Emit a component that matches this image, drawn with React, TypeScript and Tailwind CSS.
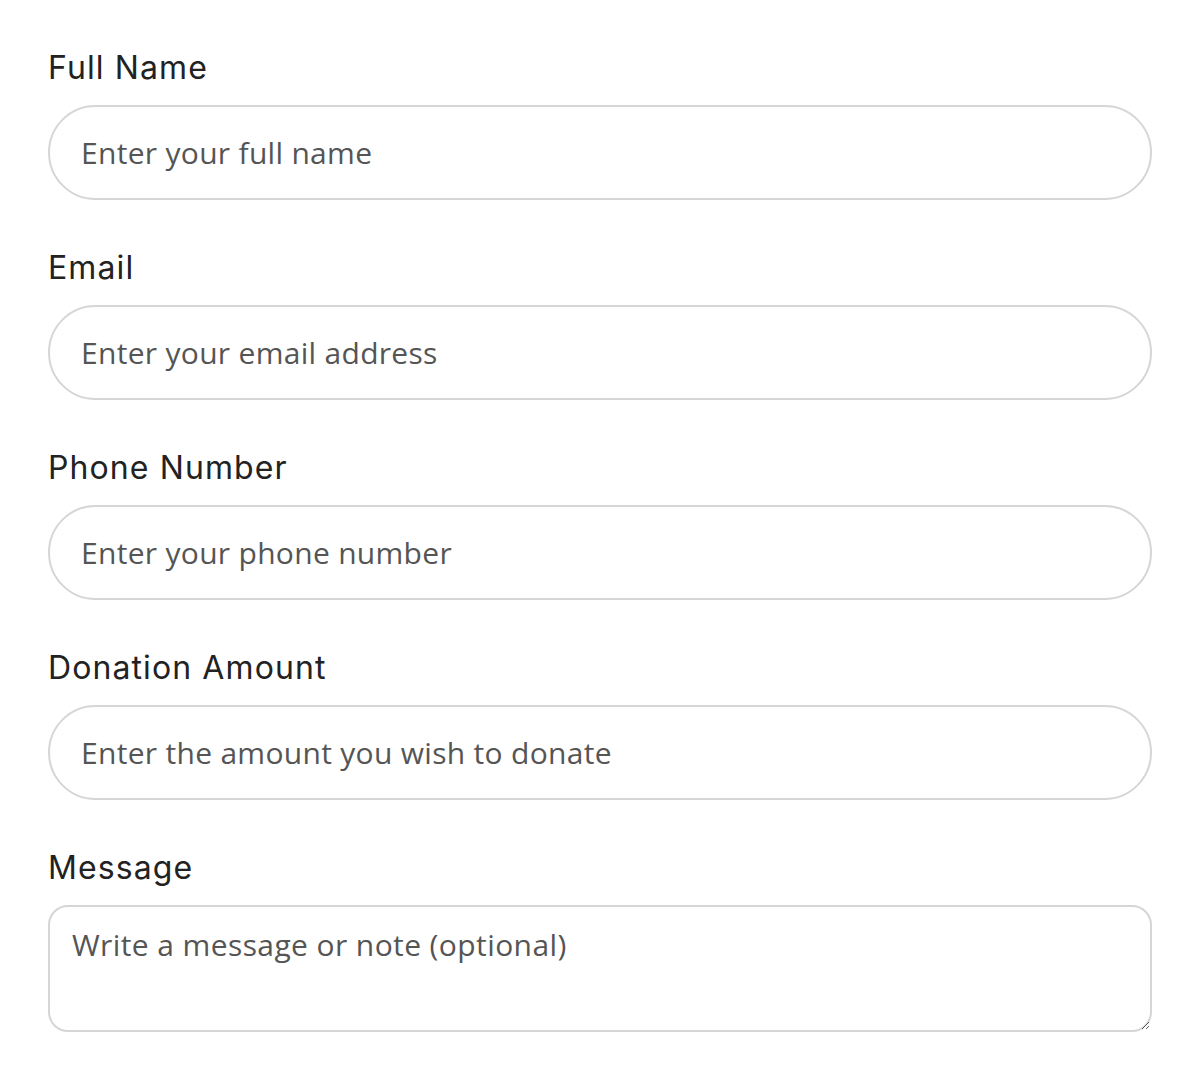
const fields = [
  { label: "Full Name", placeholder: "Enter your full name", type: "text" },
  { label: "Email", placeholder: "Enter your email address", type: "email" },
  { label: "Phone Number", placeholder: "Enter your phone number", type: "tel" },
  {
    label: "Donation Amount",
    placeholder: "Enter the amount you wish to donate",
    type: "text",
  },
];

export default function App() {
  return (
    <div className="min-h-screen bg-white px-12 pt-[45px] font-['Inter',sans-serif]">
      <form className="flex w-[1104px] flex-col gap-[45px]">
        {fields.map((f) => (
          <div key={f.label} className="flex flex-col">
            <label className="mb-[14px] h-[46px] text-[32px] leading-[46px] tracking-[1.1px] text-[#222]">
              {f.label}
            </label>
            <input
              type={f.type}
              placeholder={f.placeholder}
              className="h-[95px] w-full rounded-full border-2 border-[#d6d6d6] px-[31px] font-['Open_Sans',sans-serif] text-[30px] tracking-[0.3px] text-[#222] outline-none placeholder:text-[#555]"
            />
          </div>
        ))}

        {/* Message */}
        <div className="flex flex-col">
          <label className="mb-[14px] h-[46px] text-[32px] leading-[46px] tracking-[1.1px] text-[#222]">
            Message
          </label>
          <textarea
            placeholder="Write a message or note (optional)"
            className="h-[127px] w-full rounded-[20px] border-2 border-[#d6d6d6] px-[22px] py-[16px] font-['Open_Sans',sans-serif] text-[30px] leading-[44px] tracking-[0.4px] text-[#222] outline-none placeholder:text-[#555]"
          />
        </div>
      </form>
    </div>
  );
}
